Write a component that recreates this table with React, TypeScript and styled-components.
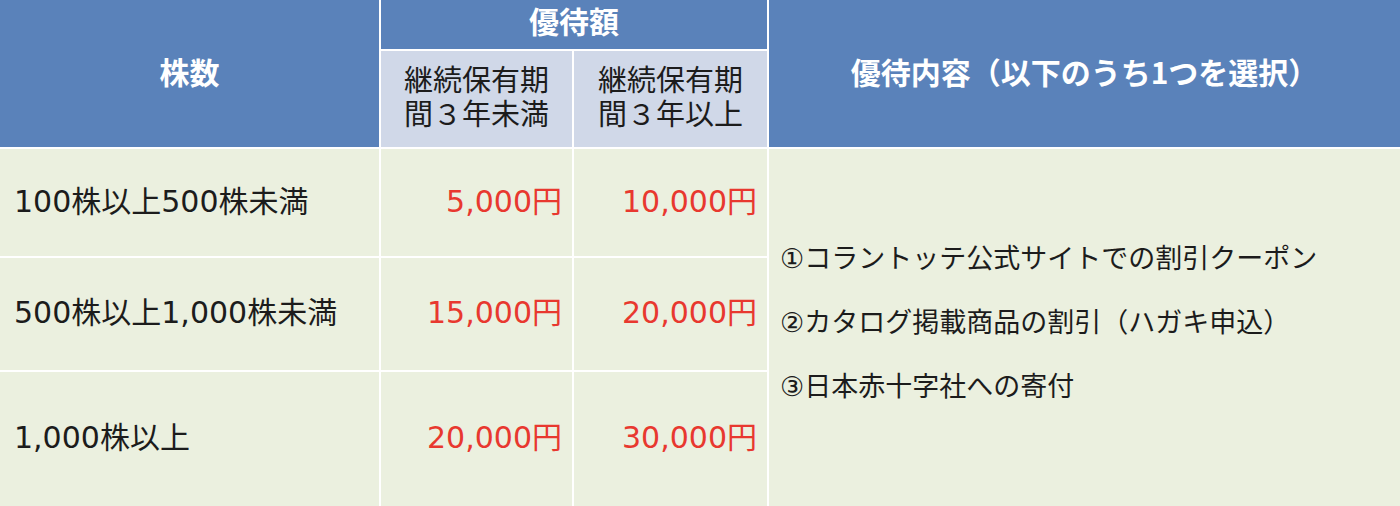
import { Fragment } from "react";
import styled, { createGlobalStyle } from "styled-components";

const GlobalStyle = createGlobalStyle`
  html, body {
    margin: 0;
    padding: 0;
    background: #ffffff;
  }
  body {
    font-family: "DejaVu Sans", "Noto Sans CJK JP", sans-serif;
  }
`;

const COLORS = {
  header: "#5a82ba",
  subHeader: "#d0d8e8",
  body: "#ebf0df",
  line: "#ffffff",
  text: "#1c1c1c",
  amount: "#e8382f",
};

const Table = styled.div`
  display: grid;
  grid-template-columns: 379px 191px 193px 1fr;
  grid-template-rows: 49px 96px 107px 112px 1fr;
  gap: 2px;
  width: 1400px;
  height: 506px;
  background: ${COLORS.line};
`;

const HeadCell = styled.div<{ $col: string; $row: string; $lift?: number }>`
  grid-column: ${(p) => p.$col};
  grid-row: ${(p) => p.$row};
  background: ${COLORS.header};
  color: #ffffff;
  font-family: "Noto Sans CJK JP", sans-serif;
  font-weight: 700;
  font-size: 30px;
  display: flex;
  align-items: center;
  justify-content: center;
  padding-bottom: ${(p) => p.$lift ?? 0}px;
  white-space: nowrap;
`;

const SubHeadCell = styled.div<{ $col: number }>`
  grid-column: ${(p) => p.$col};
  grid-row: 2;
  background: ${COLORS.subHeader};
  color: ${COLORS.text};
  font-family: "Noto Sans CJK JP", sans-serif;
  font-size: 29px;
  line-height: 34px;
  display: flex;
  align-items: center;
  justify-content: center;
  padding-bottom: 8px;
`;

const SubHeadText = styled.div`
  text-align: left;
`;

const BodyCell = styled.div<{ $align?: "left" | "right" }>`
  background: ${COLORS.body};
  display: flex;
  align-items: center;
  justify-content: ${(p) => (p.$align === "right" ? "flex-end" : "flex-start")};
  padding: ${(p) => (p.$align === "right" ? "0 10px 8px 0" : "0 0 8px 14px")};
  font-size: 30px;
  color: ${COLORS.text};
  white-space: nowrap;
`;

const Amount = styled.span`
  color: ${COLORS.amount};
`;

const OptionCell = styled.div`
  grid-column: 4;
  grid-row: 3 / 6;
  background: ${COLORS.body};
  display: flex;
  flex-direction: column;
  justify-content: center;
  gap: 24px;
  padding: 0 0 10px 11px;
`;

const Option = styled.div`
  font-size: 27px;
  line-height: 40px;
  color: ${COLORS.text};
  white-space: nowrap;
`;

const tiers = [
  { shares: "100株以上500株未満", under: "5,000円", over: "10,000円" },
  { shares: "500株以上1,000株未満", under: "15,000円", over: "20,000円" },
  { shares: "1,000株以上", under: "20,000円", over: "30,000円" },
];

const options = [
  "①コラントッテ公式サイトでの割引クーポン",
  "②カタログ掲載商品の割引（ハガキ申込）",
  "③日本赤十字社への寄付",
];

export default function App() {
  return (
    <>
      <GlobalStyle />
      <Table>
        <HeadCell $col="1" $row="1 / 3" $lift={6}>株数</HeadCell>
        <HeadCell $col="2 / 4" $row="1" $lift={10}>優待額</HeadCell>
        <HeadCell $col="4" $row="1 / 3" $lift={6}>優待内容（以下のうち1つを選択）</HeadCell>
        <SubHeadCell $col={2}>
          <SubHeadText>
            継続保有期
            <br />
            間３年未満
          </SubHeadText>
        </SubHeadCell>
        <SubHeadCell $col={3}>
          <SubHeadText>
            継続保有期
            <br />
            間３年以上
          </SubHeadText>
        </SubHeadCell>

        {tiers.map((t) => (
          <Fragment key={t.shares}>
            <BodyCell>{t.shares}</BodyCell>
            <BodyCell $align="right">
              <Amount>{t.under}</Amount>
            </BodyCell>
            <BodyCell $align="right">
              <Amount>{t.over}</Amount>
            </BodyCell>
          </Fragment>
        ))}

        <OptionCell>
          {options.map((o) => (
            <Option key={o}>{o}</Option>
          ))}
        </OptionCell>
      </Table>
    </>
  );
}
